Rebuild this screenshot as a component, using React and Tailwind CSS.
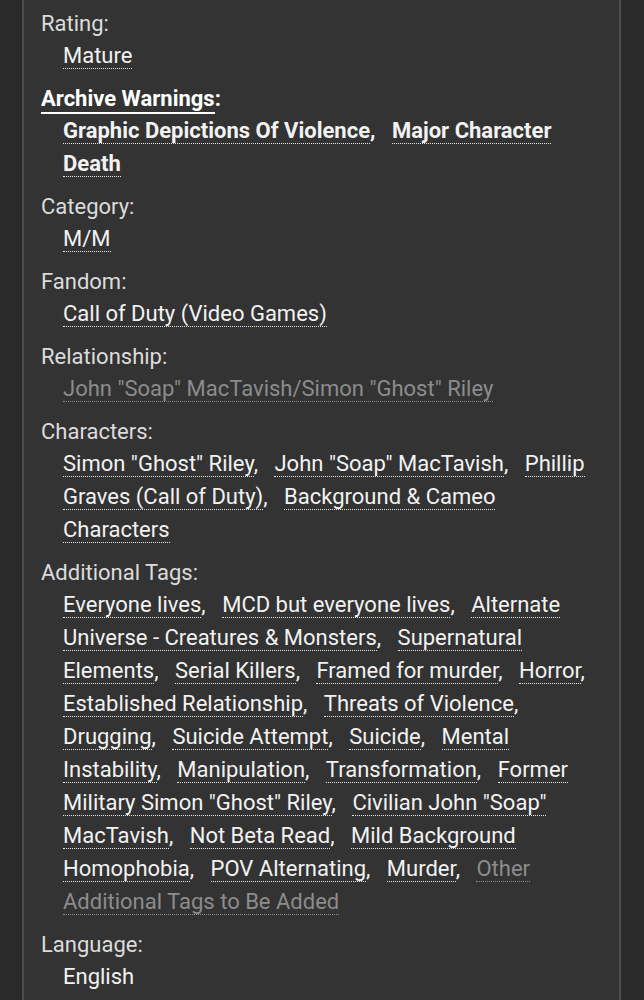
// App.jsx

const groups = [
  { label: "Rating", tags: [{ t: "Mature" }] },
  {
    label: "Archive Warnings",
    strong: true,
    tags: [{ t: "Graphic Depictions Of Violence" }, { t: "Major Character Death" }],
  },
  { label: "Category", tags: [{ t: "M/M" }] },
  { label: "Fandom", tags: [{ t: "Call of Duty (Video Games)" }] },
  {
    label: "Relationship",
    tags: [{ t: 'John "Soap" MacTavish/Simon "Ghost" Riley', dim: true }],
  },
  {
    label: "Characters",
    tags: [
      { t: 'Simon "Ghost" Riley' },
      { t: 'John "Soap" MacTavish' },
      { t: "Phillip Graves (Call of Duty)" },
      { t: "Background & Cameo Characters" },
    ],
  },
  {
    label: "Additional Tags",
    tags: [
      { t: "Everyone lives" },
      { t: "MCD but everyone lives" },
      { t: "Alternate Universe - Creatures & Monsters" },
      { t: "Supernatural Elements" },
      { t: "Serial Killers" },
      { t: "Framed for murder" },
      { t: "Horror" },
      { t: "Established Relationship" },
      { t: "Threats of Violence" },
      { t: "Drugging" },
      { t: "Suicide Attempt" },
      { t: "Suicide" },
      { t: "Mental Instability" },
      { t: "Manipulation" },
      { t: "Transformation" },
      { t: 'Former Military Simon "Ghost" Riley' },
      { t: 'Civilian John "Soap" MacTavish' },
      { t: "Not Beta Read" },
      { t: "Mild Background Homophobia" },
      { t: "POV Alternating" },
      { t: "Murder" },
      { t: "Other Additional Tags to Be Added", dim: true },
    ],
  },
  { label: "Language", plain: "English" },
];

function TagList({ tags, strong }) {
  return (
    <ul className="inline">
      {tags.map((tag, i) => {
        const last = i === tags.length - 1;
        const color = tag.dim ? "text-[#8c8c8c] border-[#8c8c8c]" : "text-[#f2f2f2] border-[#e6e6e6]";
        return (
          <li key={tag.t} className={"inline " + (last ? "" : "mr-[11px]")}>
            <a href="#" className={"border-b border-dotted " + color + (strong ? " font-bold" : "")}>
              {tag.t}
            </a>
            {last ? null : <span className={strong ? "font-bold text-[#f2f2f2]" : "text-[#f2f2f2]"}>,</span>}
            {last ? null : " "}
          </li>
        );
      })}
    </ul>
  );
}

export default function App() {
  return (
    <div className="flex min-h-screen bg-[#2a2a2a] pl-[22px]" style={{ fontFamily: "Roboto, 'Liberation Sans', sans-serif" }}>
      <div className="w-[599px] shrink-0 bg-[#333333] border-l-2 border-r-2 border-[#4c4c4c] px-[17px] pt-[9px] pb-4">
        <dl className="text-[22px]">
          {groups.map((g) => (
            <div key={g.label}>
              <dt className="leading-[30px]">
                {g.strong ? (
                  <span className="font-bold text-white">
                    <span className="border-b-2 border-white pb-[1px]">{g.label}</span>:
                  </span>
                ) : (
                  <span className="text-[#dcdcdc]">{g.label}:</span>
                )}
              </dt>
              <dd className="pl-[22px] leading-[33px] mb-3">
                {g.plain ? (
                  <span className="text-[#f2f2f2]">{g.plain}</span>
                ) : (
                  <TagList tags={g.tags} strong={g.strong} />
                )}
              </dd>
            </div>
          ))}
        </dl>
      </div>
    </div>
  );
}
